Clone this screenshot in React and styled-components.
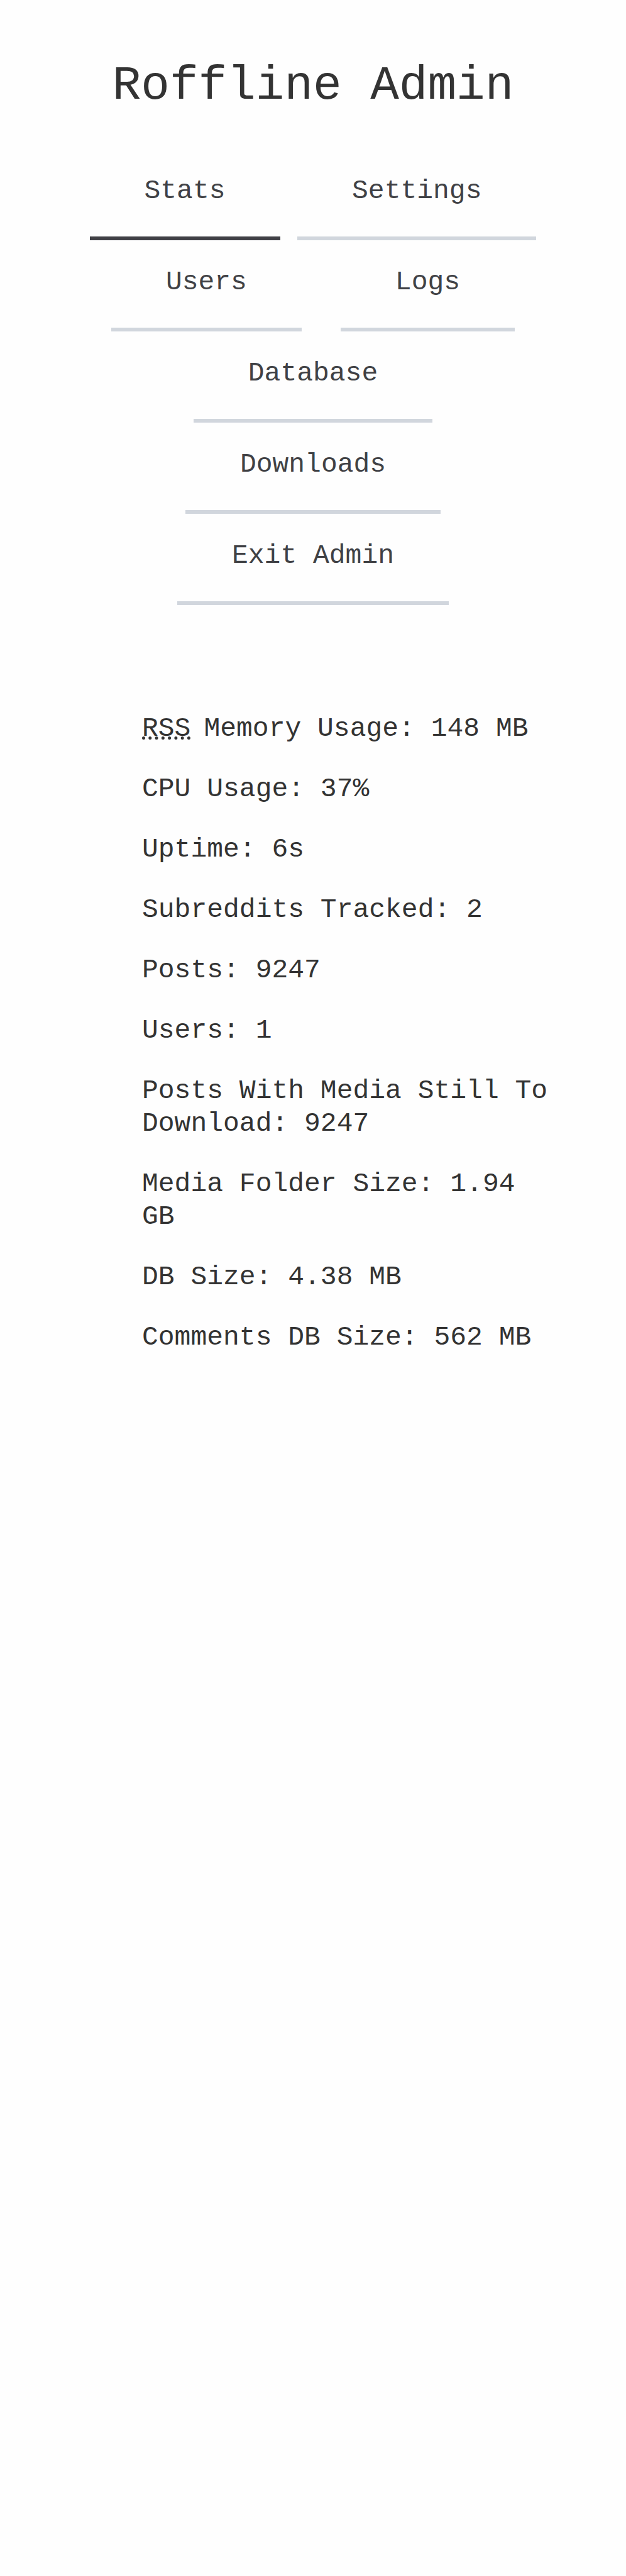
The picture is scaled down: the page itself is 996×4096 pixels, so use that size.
import React from 'react';
import styled, { createGlobalStyle } from 'styled-components';

const GlobalStyle = createGlobalStyle`
  *, *::before, *::after {
    box-sizing: border-box;
  }

  body {
    margin: 0;
    background: #fefefe;
    color: #333333;
    font-family: 'Liberation Mono', monospace;
    font-size: 43px;
    line-height: 52px;
  }
`;

const Page = styled.div`
  padding: 93px 115px;
`;

const Title = styled.h1`
  margin: 0 0 56px;
  font-size: 76px;
  font-weight: 400;
  line-height: 88px;
  text-align: center;
`;

const Nav = styled.nav`
  display: flex;
  flex-wrap: wrap;
  justify-content: space-evenly;
`;

const NavLink = styled.a`
  padding: 41px 87px 46px;
  border-bottom: 6px solid ${({ $active }) => ($active ? '#404045' : '#d1d6dd')};
  color: #404145;
  text-decoration: none;
`;

const StatList = styled.ul`
  display: flex;
  flex-direction: column;
  gap: 44px;
  margin: 171px 0 0;
  padding: 0 0 0 111px;
  list-style: none;
`;

const Stat = styled.li`
  display: flex;
  gap: 21px;
`;

const Term = styled.abbr`
  text-decoration: underline dotted 5px;
  text-decoration-skip-ink: none;
  text-underline-offset: 1px;
`;

const sections = ['Stats', 'Settings', 'Users', 'Logs', 'Database', 'Downloads', 'Exit Admin'];

const stats = [
  { term: 'RSS', title: 'Resident Set Size', text: 'Memory Usage: 148 MB' },
  { text: 'CPU Usage: 37%' },
  { text: 'Uptime: 6s' },
  { text: 'Subreddits Tracked: 2' },
  { text: 'Posts: 9247' },
  { text: 'Users: 1' },
  { text: 'Posts With Media Still To Download: 9247' },
  { text: 'Media Folder Size: 1.94 GB' },
  { text: 'DB Size: 4.38 MB' },
  { text: 'Comments DB Size: 562 MB' },
];

export default function App() {
  return (
    <>
      <GlobalStyle />
      <Page>
        <header>
          <Title>Roffline Admin</Title>
          <Nav aria-label="Admin sections">
            {sections.map((name, index) => (
              <NavLink
                key={name}
                href={`#${name.toLowerCase().replace(' ', '-')}`}
                $active={index === 0}
                aria-current={index === 0 ? 'page' : undefined}
              >
                {name}
              </NavLink>
            ))}
          </Nav>
        </header>
        <main>
          <StatList>
            {stats.map(({ term, title, text }) => (
              <Stat key={text}>
                {term && <Term title={title}>{term}</Term>}{' '}
                <span>{text}</span>
              </Stat>
            ))}
          </StatList>
        </main>
      </Page>
    </>
  );
}
